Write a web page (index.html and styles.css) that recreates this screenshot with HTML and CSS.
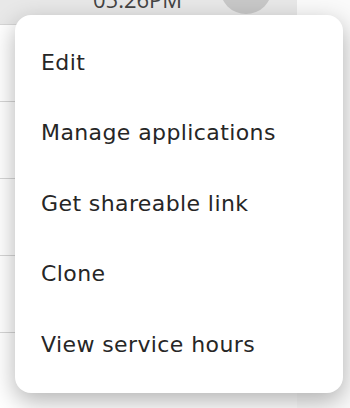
FILE: index.html
```html
<!DOCTYPE html>
<html lang="en">
  <head>
    <meta charset="UTF-8" />
    <meta name="viewport" content="width=device-width, initial-scale=1.0" />
    <title>Row actions</title>
    <link rel="stylesheet" href="styles.css">
  </head>
  <body>
    <div class="schedule-table">
      <div class="schedule-row is-active">
        <span class="schedule-time">05:26PM</span>
        <span class="schedule-avatar"></span>
      </div>
      <div class="schedule-row"></div>
      <div class="schedule-row"></div>
      <div class="schedule-row"></div>
      <div class="schedule-row"></div>
      <div class="schedule-row"></div>
    </div>

    <ul class="action-menu" role="menu">
      <li role="menuitem">Edit</li>
      <li role="menuitem">Manage applications</li>
      <li role="menuitem">Get shareable link</li>
      <li role="menuitem">Clone</li>
      <li role="menuitem">View service hours</li>
    </ul>
  </body>
</html>
```

FILE: styles.css
```css
body {
  margin: 0;
  background: #fafafa;
  font-family: "DejaVu Sans", Arial, sans-serif;
  color: #222;
  overflow: hidden;
}

.schedule-table {
  width: 297px;
  margin-top: -52px;
}

.schedule-row {
  display: flex;
  align-items: flex-end;
  height: 76px;
  border-bottom: 1px solid #d6d6d6;
  background: #fff;

  &.is-active {
    background: #e8e8e8;
  }
}

.schedule-time {
  margin: 0 0 14px 93px;
  font-family: "Open Sans", Arial, sans-serif;
  font-size: 22px;
  line-height: 22px;
  color: #444;
}

.schedule-avatar {
  width: 52px;
  height: 52px;
  margin: 0 0 10px 38px;
  border-radius: 50%;
  background: #c8c8c8;
}

/* Overlay menu */
.action-menu {
  position: absolute;
  top: 15px;
  left: 15px;
  width: 328px;
  height: 378px;
  box-sizing: border-box;
  margin: 0;
  padding: 12px 0 0;
  list-style: none;
  background: #fff;
  border-radius: 16px;
  box-shadow: 0 8px 24px rgba(0, 0, 0, 0.3);

  li {
    height: 70.5px;
    display: flex;
    align-items: center;
    padding-left: 26px;
    font-size: 22px;
    letter-spacing: 0.4px;
    color: #262626;
    cursor: pointer;
  }
}
```
